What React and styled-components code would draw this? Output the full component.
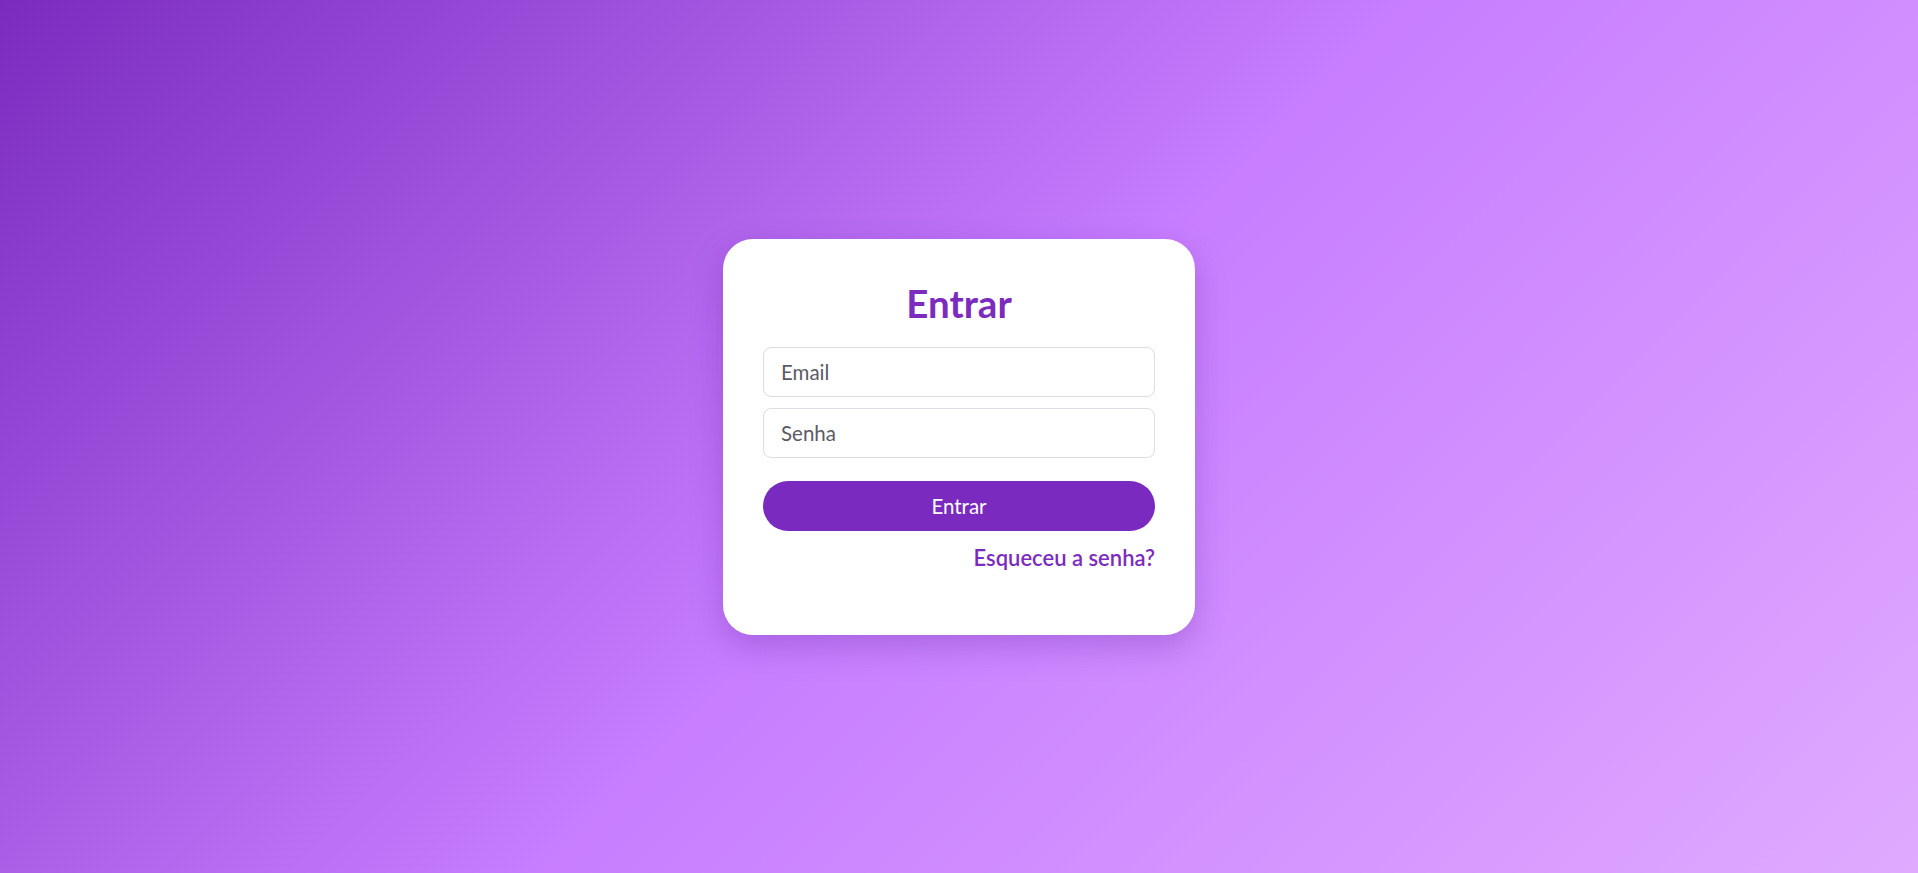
import React from 'react';
import styled, { createGlobalStyle } from 'styled-components';

const GlobalStyle = createGlobalStyle`
  * { box-sizing: border-box; }
  html, body { margin: 0; padding: 0; }
  body {
    font-family: Lato, "Open Sans", "Liberation Sans", sans-serif;
    min-height: 100vh;
    background: linear-gradient(135deg, #7b2cbf 0%, #c77dff 50%, #e0aaff 100%);
    background-attachment: fixed;
  }
`;

const Page = styled.main`
  min-height: 100vh;
  display: flex;
  align-items: center;
  justify-content: center;
`;

const Card = styled.div`
  width: 472px;
  background: #fff;
  border-radius: 30px;
  padding: 40px 40px 64px;
  box-shadow: 0 12px 32px rgba(80, 20, 140, 0.25);
  display: flex;
  flex-direction: column;
`;

const Title = styled.h1`
  margin: 0 0 20px;
  text-align: center;
  font-size: 38.5px;
  line-height: 48px;
  font-weight: 700;
  color: #7b2cbf;
`;

const Input = styled.input`
  height: 50px;
  width: 100%;
  margin-bottom: ${(p) => p.$gap || 11}px;
  padding: 0 17px;
  border: 1px solid #dddde3;
  border-radius: 8px;
  font-family: inherit;
  font-size: 20.5px;
  color: #333;
  outline: none;

  &::placeholder {
    color: #5b5b66;
  }
`;

const Button = styled.button`
  height: 50px;
  width: 100%;
  margin-top: 12px;
  border: none;
  border-radius: 25px;
  background: #7b2abf;
  color: #fff;
  font-family: inherit;
  font-size: 20.5px;
  cursor: pointer;
`;

const Forgot = styled.a`
  align-self: flex-end;
  margin-top: 14px;
  font-size: 22px;
  line-height: 26px;
  font-weight: 600;
  color: #7b2cbf;
  text-decoration: none;
`;

export default function App() {
  return (
    <>
      <GlobalStyle />
      <Page>
        <Card>
          <Title>Entrar</Title>
          <Input type="email" placeholder="Email" />
          <Input type="password" placeholder="Senha" $gap={0} />
          <Button>Entrar</Button>
          <Forgot href="#">Esqueceu a senha?</Forgot>
        </Card>
      </Page>
    </>
  );
}
